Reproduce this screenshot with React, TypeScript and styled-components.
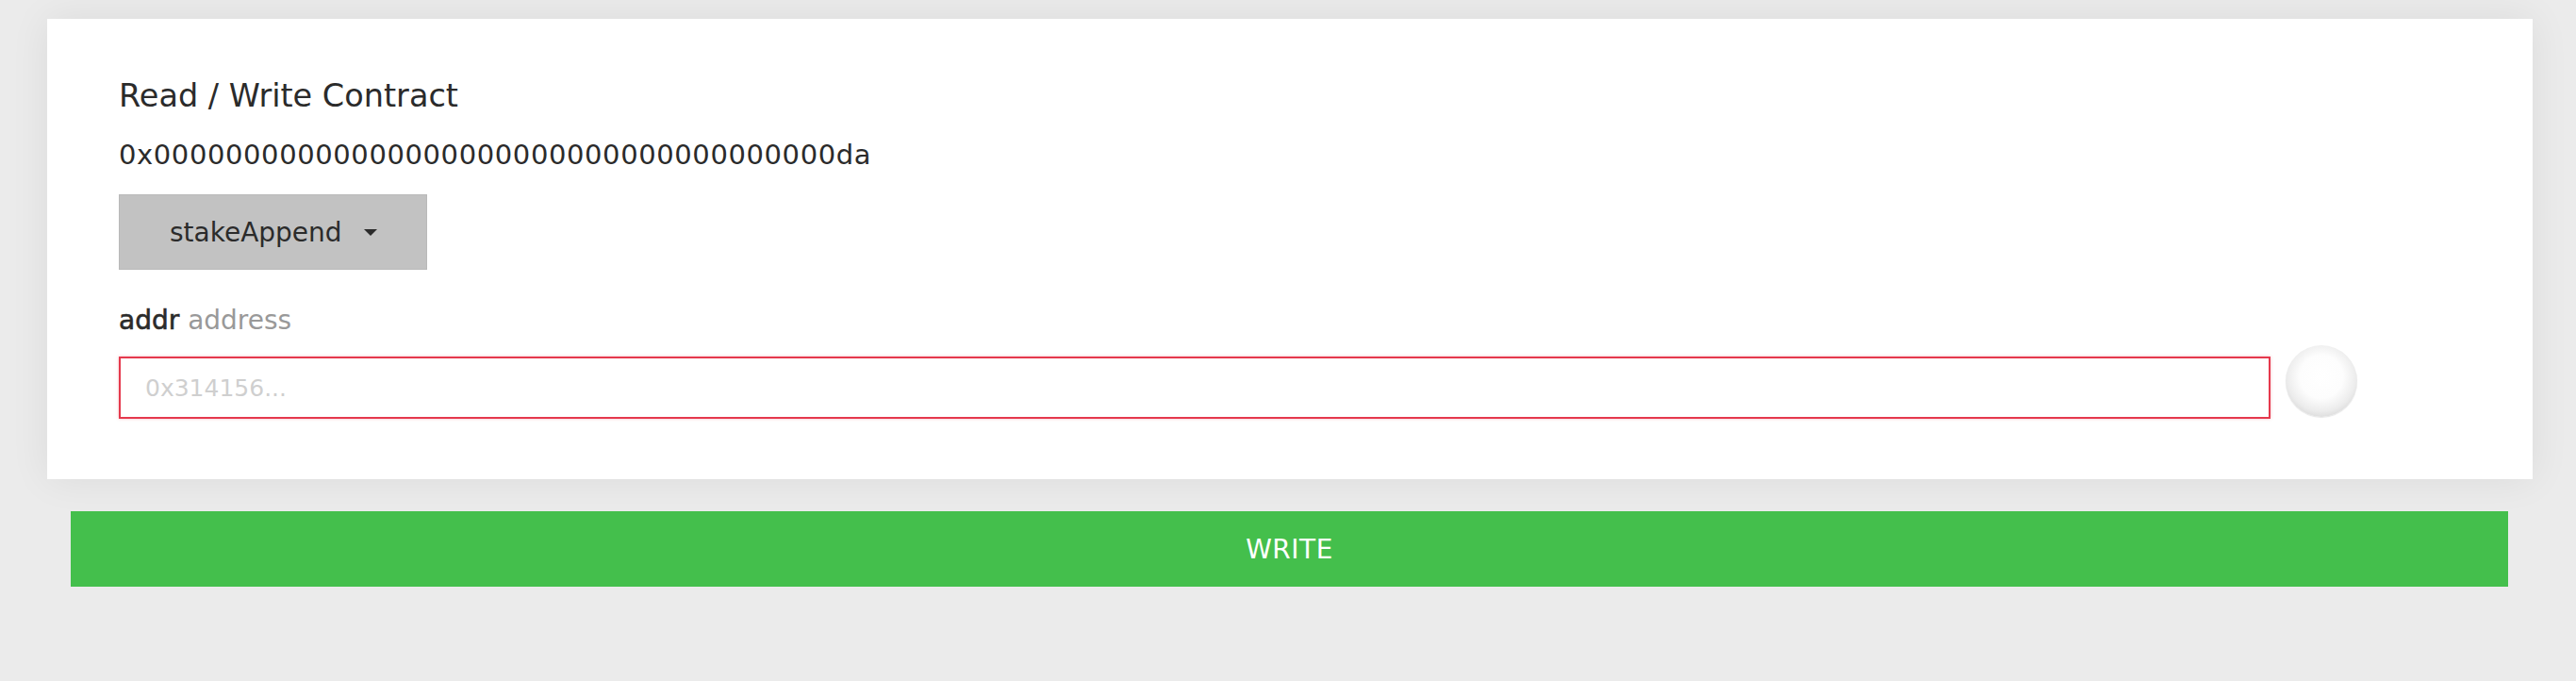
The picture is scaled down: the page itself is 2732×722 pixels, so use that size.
import React from 'react';
import styled, { createGlobalStyle } from 'styled-components';

const GlobalStyle = createGlobalStyle`
  body {
    margin: 0;
    background: #ebebeb;
    font-family: "DejaVu Sans", "Liberation Sans", sans-serif;
    color: #333;
  }
`;

const Page = styled.div`
  padding: 20px 46px 0 50px;
`;

const Card = styled.section`
  background: #fff;
  padding: 62px 76px 64px 76px;
  box-shadow: 0 0 40px rgba(0, 0, 0, 0.07);
`;

const Title = styled.h3`
  margin: 0;
  font-size: 33.5px;
  line-height: 40px;
  font-weight: 400;
  color: #2b2b2b;
`;

const Address = styled.div`
  margin-top: 24px;
  font-size: 29px;
  line-height: 36px;
  letter-spacing: 0.6px;
  color: #2b2b2b;
`;

const Dropdown = styled.button`
  display: flex;
  align-items: center;
  margin-top: 24px;
  height: 80px;
  padding: 0 52px 0 53px;
  border: 1px solid #b9b9b9;
  background: #c2c2c2;
  font-family: inherit;
  font-size: 28px;
  color: #2b2b2b;
  cursor: pointer;
`;

const Caret = styled.span`
  margin-left: 23px;
  width: 0;
  height: 0;
  border-left: 7px solid transparent;
  border-right: 7px solid transparent;
  border-top: 7px solid #2b2b2b;
`;

const Label = styled.label`
  display: block;
  margin-top: 36px;
  font-size: 28px;
  line-height: 36px;
`;

const Name = styled.span`
  color: #2b2b2b;
  -webkit-text-stroke: 0.6px #2b2b2b;
`;

const Type = styled.span`
  color: #999;
`;

const InputRow = styled.div`
  display: flex;
  align-items: flex-start;
  gap: 16px;
  margin-top: 8px;
  padding-right: 110px;
`;

const Input = styled.input`
  flex: 1;
  margin-top: 12px;
  height: 66px;
  box-sizing: border-box;
  padding: 0 26px;
  border: 2px solid #e5394d;
  box-shadow: 0 0 3px rgba(229, 57, 77, 0.35);
  outline: none;
  font-family: inherit;
  font-size: 25px;
  color: #333;

  &::placeholder {
    color: #cfcfcf;
  }
`;

const Status = styled.span`
  flex: none;
  width: 76px;
  height: 76px;
  border-radius: 50%;
  background: radial-gradient(circle at 50% 44%, #ffffff 0%, #fdfdfd 40%, #ececec 64%, #d2d2d2 84%, #ababab 100%);
  box-shadow: 0 1px 1px rgba(0, 0, 0, 0.1);
`;

const WriteButton = styled.button`
  display: block;
  box-sizing: border-box;
  width: calc(100% - 51px);
  margin: 34px 26px 0 25px;
  height: 80px;
  border: none;
  background: #44bf4c;
  color: #fff;
  font-family: inherit;
  font-size: 28px;
  letter-spacing: 0.5px;
  cursor: pointer;
`;

const App = () => {
  return (
    <>
      <GlobalStyle />
      <Page>
        <Card>
          <Title>Read / Write Contract</Title>
          <Address>0x00000000000000000000000000000000000000da</Address>
          <Dropdown>
            stakeAppend
            <Caret />
          </Dropdown>
          <Label htmlFor="addr">
            <Name>addr</Name> <Type>address</Type>
          </Label>
          <InputRow>
            <Input id="addr" type="text" placeholder="0x314156..." />
            <Status />
          </InputRow>
        </Card>
        <WriteButton>WRITE</WriteButton>
      </Page>
    </>
  );
};

export default App;
